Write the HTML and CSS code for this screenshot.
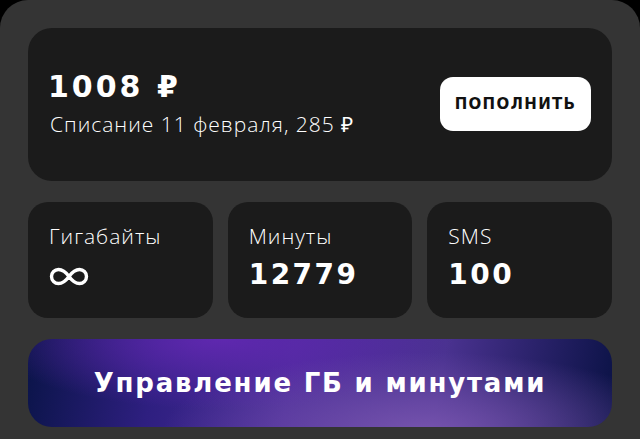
FILE: index.html
```html
<!DOCTYPE html>
<html lang="ru">
<head>
<meta charset="utf-8">
<link rel="stylesheet" href="styles.css">
</head>
<body>
<div class="panel">
  <section class="balance">
    <div class="balance-info">
      <div class="amount">1008 ₽</div>
      <div class="charge">Списание 11 февраля, 285 ₽</div>
    </div>
    <button class="topup">ПОПОЛНИТЬ</button>
  </section>
  <section class="stats">
    <div class="stat">
      <div class="stat-label">Гигабайты</div>
      <div class="stat-value">
        <svg class="inf" viewBox="-2 -2 42 21" width="42" height="21" aria-label="∞">
          <path d="M19 8.5 C15 3 11.5 1.5 8.5 1.5 A7 7 0 0 0 8.5 15.5 C11.5 15.5 15 14 19 8.5 C23 3 26.5 1.5 29.5 1.5 A7 7 0 0 1 29.5 15.5 C26.5 15.5 23 14 19 8.5 Z" fill="none" stroke="#fff" stroke-width="3.4"/>
        </svg>
      </div>
    </div>
    <div class="stat">
      <div class="stat-label">Минуты</div>
      <div class="stat-value">12779</div>
    </div>
    <div class="stat">
      <div class="stat-label">SMS</div>
      <div class="stat-value">100</div>
    </div>
  </section>
  <button class="manage">Управление ГБ и минутами</button>
</div>
</body>
</html>
```
FILE: styles.css
```css
html, body {
  margin: 0;
  padding: 0;
  background: #000;
  height: 100%;
}
.panel {
  background: #343434;
  border-radius: 28px 28px 0 0;
  padding: 28px 28px 20px;
  min-height: 100%;
  box-sizing: border-box;
  display: flex;
  flex-direction: column;
  gap: 21px;
  font-family: "Open Sans", "Liberation Sans", sans-serif;
  color: #fff;
}
.balance {
  background: #1b1b1b;
  border-radius: 24px;
  height: 153px;
  box-sizing: border-box;
  padding: 0 21px 0 22px;
  display: flex;
  align-items: center;
  justify-content: space-between;
}
.balance-info {
  display: flex;
  flex-direction: column;
  gap: 7px;
  margin-top: 0;
}
.amount {
  font-family: "DejaVu Sans", sans-serif;
  font-weight: bold;
  font-size: 30px;
  line-height: 32px;
  letter-spacing: 3px;
  margin-left: -2px;
}
.charge {
  font-size: 21px;
  line-height: 28px;
  font-weight: 300;
  letter-spacing: 1px;
  color: #fff;
}
.topup {
  background: #fff;
  color: #111;
  border: none;
  border-radius: 13px;
  width: 151px;
  height: 54px;
  font-family: "DejaVu Sans", sans-serif;
  font-weight: bold;
  font-size: 15px;
  letter-spacing: 1.3px;
  padding: 0;
  margin-top: -2px;
}
.stats {
  display: grid;
  grid-template-columns: 1fr 1fr 1fr;
  gap: 15px;
}
.stat {
  background: #1b1b1b;
  border-radius: 20px;
  height: 116px;
  box-sizing: border-box;
  padding: 20px 21px 0;
  display: flex;
  flex-direction: column;
  gap: 9px;
}
.stat-label {
  font-size: 21px;
  line-height: 28px;
  font-weight: 300;
  letter-spacing: 1px;
  color: #fff;
}
.stat-value {
  font-family: "DejaVu Sans", sans-serif;
  font-weight: bold;
  font-size: 28px;
  line-height: 32px;
  height: 32px;
  letter-spacing: 2.5px;
  display: flex;
  align-items: center;
}
.inf {
  display: block;
  margin-left: -1px;
  margin-top: 3px;
}
.manage {
  height: 88px;
  border: none;
  border-radius: 24px;
  color: #fff;
  font-family: "DejaVu Sans", sans-serif;
  font-weight: bold;
  font-size: 26px;
  letter-spacing: 1.8px;
  background:
    radial-gradient(ellipse 45% 90% at 68% 105%, rgba(120, 85, 175, 0.95), rgba(120, 85, 175, 0) 100%),
    radial-gradient(ellipse 40% 80% at 33% 0%, rgba(95, 40, 175, 1), rgba(95, 40, 175, 0) 100%),
    linear-gradient(100deg, #0a1448 0%, #2e1f80 22%, #4a2c98 45%, #4a3290 70%, #0a1245 100%);
  padding: 0;
}
```
